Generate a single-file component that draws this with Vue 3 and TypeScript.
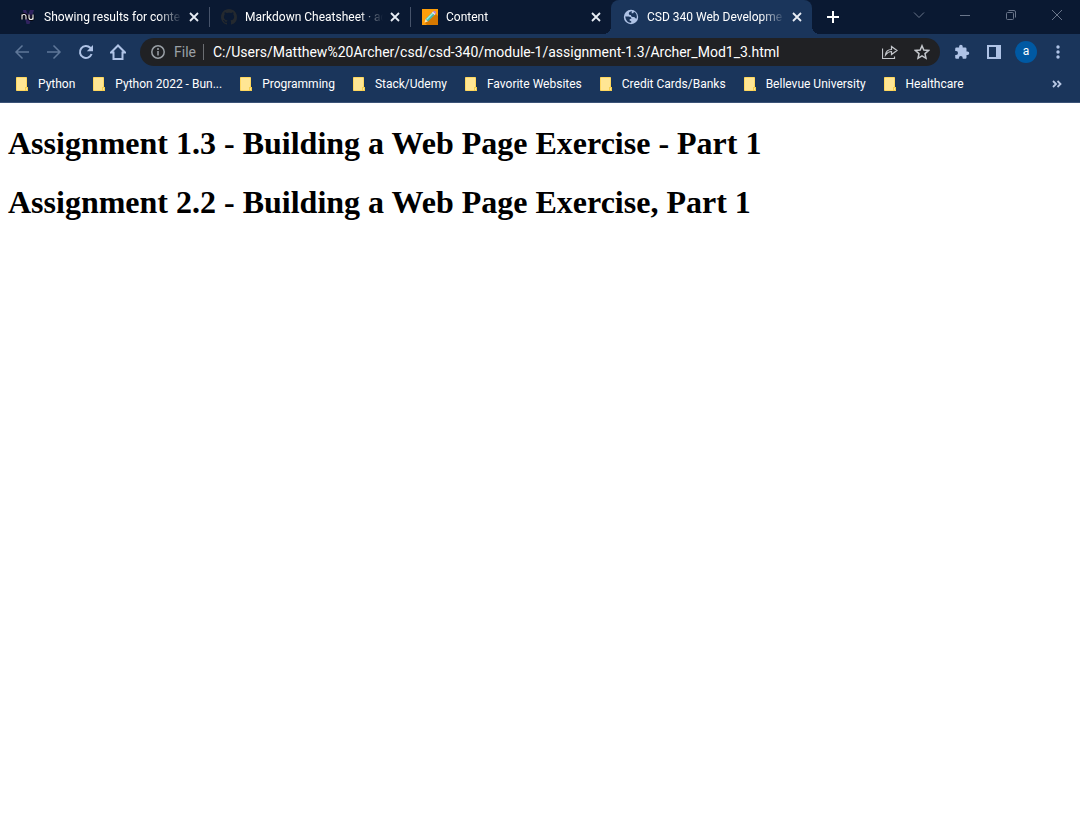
<script setup lang="ts">
import { ref } from 'vue'

interface Tab {
  icon: 'nu' | 'github' | 'pencil' | 'globe'
  title: string
}

const tabs: Tab[] = [
  { icon: 'nu', title: 'Showing results for conte' },
  { icon: 'github', title: 'Markdown Cheatsheet · ad' },
  { icon: 'pencil', title: 'Content' },
  { icon: 'globe', title: 'CSD 340 Web Developme' },
]
const activeTab = ref(3)

const address = ref('C:/Users/Matthew%20Archer/csd/csd-340/module-1/assignment-1.3/Archer_Mod1_3.html')

const bookmarks: string[] = [
  'Python',
  'Python 2022 - Bun...',
  'Programming',
  'Stack/Udemy',
  'Favorite Websites',
  'Credit Cards/Banks',
  'Bellevue University',
  'Healthcare',
]
</script>

<template>
  <div class="browser">
    <header class="chrome">
      <div class="tab-strip">
        <div class="tabs">
          <div v-for="(tab, i) in tabs" :key="tab.title" class="tab" :class="{ active: i === activeTab, before: i === activeTab - 1 }">
            <button class="tab-main" type="button" @click="activeTab = i">
              <svg v-if="tab.icon === 'nu'" class="favicon" viewBox="0 0 16 16">
                <path d="M3 1h3l2 5 2-5h4L9.500 15h-3z" fill="#30235f" />
                <path d="M2 10.500V5.500M2 7.500q0-2 2-2t2 2v3M9 5.500v3q0 2 2 2t2-2v-3M13 5.500v5" fill="none" stroke="#06060c" stroke-width="3" />
                <path d="M2 10.500V5.500M2 7.500q0-2 2-2t2 2v3M9 5.500v3q0 2 2 2t2-2v-3M13 5.500v5" fill="none" stroke="#f4f4f6" stroke-width="1.100" />
              </svg>
              <svg v-else-if="tab.icon === 'github'" class="favicon" viewBox="0 0 16 16">
                <path fill="#24292f" d="M8 0C3.580 0 0 3.580 0 8c0 3.540 2.290 6.530 5.470 7.590.4.070.55-.17.55-.38 0-.19-.010-.82-.010-1.490-2.010.37-2.530-.49-2.690-.94-.09-.23-.48-.94-.82-1.130-.28-.15-.68-.52-.010-.53.63-.010 1.080.58 1.230.82.72 1.210 1.870.87 2.330.66.070-.52.28-.87.51-1.070-1.780-.2-3.640-.89-3.640-3.950 0-.87.31-1.590.82-2.150-.08-.2-.36-1.020.08-2.120 0 0 .67-.21 2.200.82.64-.18 1.320-.27 2-.27s1.360.09 2 .27c1.530-1.040 2.200-.82 2.200-.82.44 1.100.16 1.920.08 2.120.51.56.82 1.270.82 2.150 0 3.070-1.870 3.750-3.650 3.950.29.25.54.73.54 1.480 0 1.070-.010 1.930-.010 2.200 0 .21.15.46.55.38A8.010 8.010 0 0 0 16 8c0-4.420-3.580-8-8-8z" />
              </svg>
              <svg v-else-if="tab.icon === 'pencil'" class="favicon" viewBox="0 0 16 16">
                <path fill="#ff9f0a" d="M0 0h16v16H0z" />
                <path fill="#d67800" d="M3 14 14 5l2 2v9H5z" />
                <path fill="#f6e2c0" d="m2.500 13.500 1-3.500 2.500 2.500z" />
                <path fill="#43b9ad" d="m3.500 10 6.500-6.500L12.500 6 6 12.500z" />
                <path fill="#a4ecdc" d="m4 10 6.500-6.500 1 1L5 11z" />
                <path fill="#e6e1ff" d="m10 3.500 1-1L13.500 5l-1 1z" />
                <path fill="#b884d9" d="m11 2.500.6-.5q.8-.5 1.700.3t.7 1.700l-.5 1z" />
              </svg>
              <svg v-else class="favicon" viewBox="0 0 16 16">
                <circle cx="8" cy="8" r="7.200" fill="#afc3e6" />
                <path fill="#1a355b" d="M9 2.200Q5.800 2.500 5.800 4.700q.2 1.600 2 1.300.3 2.400 2.500 2 1.500-.2 2 1.300l1.400.2Q14.500 4.500 11 2.800l-.8 1.400H8.500zM2.200 7.500h3.600q2.600.2 2.700 2.300l-1.800.2v1.700l1.500.2v1.900Q3 13.800 2.200 7.500z" />
              </svg>
              <span class="title">{{ tab.title }}</span>
            </button>
            <button class="close" type="button" aria-label="Close tab">
              <svg viewBox="0 0 16 16"><path d="m4 4 8 8m0-8-8 8" fill="none" stroke="#e8edf5" stroke-width="1.800" /></svg>
            </button>
          </div>
          <button class="new-tab" type="button" aria-label="New tab">
            <svg viewBox="0 0 16 16"><path d="M8 2v12M2 8h12" fill="none" stroke="#fff" stroke-width="2" /></svg>
          </button>
        </div>
        <div class="window-controls">
          <button type="button" aria-label="Search tabs"><svg viewBox="0 0 16 16"><path d="m3 5.500 5 5 5-5" /></svg></button>
          <button type="button" aria-label="Minimize"><svg viewBox="0 0 16 16"><path d="M3 8.500h10" /></svg></button>
          <button type="button" aria-label="Restore">
            <svg viewBox="0 0 16 16"><rect x="3.500" y="5.500" width="7" height="7" rx="1" /><path d="M5.500 3.500H11q1.500 0 1.500 1.500v5.500" /></svg>
          </button>
          <button type="button" aria-label="Close window"><svg viewBox="0 0 16 16"><path d="m3 3 10 10m0-10L3 13" /></svg></button>
        </div>
      </div>

      <div class="toolbar">
        <nav class="nav">
          <button type="button" class="dim" aria-label="Back"><svg viewBox="0 0 16 16"><path d="M15 8H2m6.500-6.500L2 8l6.500 6.500" /></svg></button>
          <button type="button" class="dim" aria-label="Forward"><svg viewBox="0 0 16 16"><path d="M1 8h13M7.500 1.500 14 8l-6.500 6.500" /></svg></button>
          <button type="button" aria-label="Reload">
            <svg viewBox="0 0 16 16"><path class="bold" d="M13.600 10A6 6 0 1 1 12.300 3.800L14 5.500" /><path d="M15 1v6.200H8.800z" class="solid" /></svg>
          </button>
          <button type="button" aria-label="Home"><svg viewBox="0 0 16 16"><path class="bold" d="M1 8.500 8 1.500l7 7h-2.500v6.500h-9V8.500z" /></svg></button>
        </nav>
        <form class="omnibox" @submit.prevent>
          <button class="site-info" type="button">
            <svg viewBox="0 0 16 16"><circle cx="8" cy="8" r="6.200" /><path d="M8 7v4.500M8 4v2" /></svg>
            <span>File</span>
          </button>
          <input v-model="address" type="text" aria-label="Address" spellcheck="false" />
          <button type="button" aria-label="Share">
            <svg viewBox="0 0 16 16"><path class="fine" d="M.5 4.500v10h12v-2M3.500 11q.5-5.500 6-5.500V2.500L15 6.500l-5.500 4v-3Q6 7.500 3.500 11z" /></svg>
          </button>
          <button type="button" aria-label="Bookmark this page">
            <svg viewBox="0 0 16 16"><path d="m8 1.800 1.800 4.300 4.700.4L11 9.600l1 4.700-4-2.500-4 2.500 1-4.700L1.500 6.500l4.700-.4z" /></svg>
          </button>
        </form>
        <div class="actions">
          <button type="button" aria-label="Extensions">
            <svg viewBox="0 0 16 16"><path class="solid" d="M13.500 7.500h-1V4.700q0-1.200-1.200-1.200H8.700V2.600a1.800 1.800 0 0 0-3.600 0v.9H2.400Q1.200 3.500 1.200 4.700v2.400h.9a1.900 1.900 0 0 1 0 3.800h-.9v2.700q0 1.200 1.200 1.200h2.500v-.9a1.900 1.900 0 0 1 3.800 0v.9h2.600q1.200 0 1.200-1.200V11h1a1.750 1.750 0 0 0 0-3.500z" /></svg>
          </button>
          <button type="button" aria-label="Side panel">
            <svg viewBox="0 0 16 16"><path class="solid" fill-rule="evenodd" d="M1 1h14v14H1zm2 2v10h7V3z" /></svg>
          </button>
          <button type="button" class="profile" aria-label="Profile"><span>a</span></button>
          <button type="button" aria-label="Menu">
            <svg viewBox="0 0 16 16"><g class="solid"><circle cx="8" cy="3" r="1.700" /><circle cx="8" cy="8" r="1.700" /><circle cx="8" cy="13" r="1.700" /></g></svg>
          </button>
        </div>
      </div>

      <nav class="bookmarks" aria-label="Bookmarks">
        <button v-for="name in bookmarks" :key="name" class="bookmark" type="button">
          <svg viewBox="0 0 12 14">
            <path d="M.5.5h10v13H.5z" fill="#ffe694" stroke="#ffd75e" />
            <path d="M9 10h3v4H9z" fill="#f5cf50" /><path d="M10 11h1v2h-1z" fill="#ffe694" />
          </svg>
          <span>{{ name }}</span>
        </button>
        <button class="overflow" type="button" aria-label="More bookmarks">
          <svg viewBox="0 0 16 16"><path d="m4 5 3 3-3 3m4.500-6 3 3-3 3" fill="none" stroke="#b8c8e4" stroke-width="1.800" /></svg>
        </button>
      </nav>
    </header>

    <main class="page">
      <h1>Assignment 1.3 - Building a Web Page Exercise - Part 1</h1>
      <h1>Assignment 2.2 - Building a Web Page Exercise, Part 1</h1>
    </main>
  </div>
</template>

<style>
body {
  margin: 0;
  background: #fff;
}
</style>

<style scoped>
.browser {
  min-height: 100vh;
  background: #fff;
}
.chrome {
  background: #1a355b;
  border-bottom: 1px solid #3b5377;
  font-family: "Segoe UI", Roboto, "Open Sans", sans-serif;
  font-size: 12px;
  color: #fff;
}
button {
  display: flex;
  align-items: center;
  justify-content: center;
  padding: 0;
  border: 0;
  background: none;
  color: inherit;
  font: inherit;
}
svg {
  display: block;
  flex: none;
  width: 16px;
  height: 16px;
}
.tab-strip {
  display: flex;
  justify-content: space-between;
  height: 34px;
  background: #0a1932;
}
.tabs {
  display: flex;
  flex: 1;
  min-width: 0;
  padding-left: 8px;
}
.tab {
  position: relative;
  display: flex;
  align-items: center;
  flex: 0 1 201px;
  box-sizing: border-box;
  min-width: 0;
  padding: 0 7px 0 12px;
}
.tab:not(.active, .before)::after {
  content: "";
  position: absolute;
  right: -1px;
  top: 7px;
  width: 1px;
  height: 20px;
  background: #46536a;
}
.tab.active {
  border-radius: 8px 8px 0 0;
  background: #1a355b;
}
.tab.active::before,
.tab.active::after {
  content: "";
  position: absolute;
  bottom: 0;
  width: 8px;
  height: 8px;
}
.tab.active::before {
  right: 100%;
  background: radial-gradient(circle at 0 0, transparent 8px, #1a355b 8px);
}
.tab.active::after {
  left: 100%;
  background: radial-gradient(circle at 100% 0, transparent 8px, #1a355b 8px);
}
.tab-main {
  flex: 1;
  min-width: 0;
  gap: 8px;
  justify-content: flex-start;
  height: 34px;
}
.title {
  flex: 1;
  overflow: hidden;
  white-space: nowrap;
  text-align: left;
  line-height: 16px;
  mask-image: linear-gradient(to right, #000 calc(100% - 24px), transparent);
}
.close {
  margin-left: 4px;
}
.new-tab {
  width: 28px;
  margin-left: 7px;
}
.window-controls {
  display: flex;
  height: 29px;
}
.window-controls button {
  width: 46px;
}
.window-controls path,
.window-controls rect {
  fill: none;
  stroke: #69758a;
}
.toolbar {
  display: flex;
  align-items: center;
  height: 36px;
  color: #afc3e6;
}
.toolbar path,
.toolbar circle {
  fill: none;
  stroke: currentColor;
  stroke-width: 1.5;
}
.toolbar path.bold {
  stroke-width: 2;
}
.toolbar path.fine {
  stroke-width: 1.2;
}
.toolbar path.solid,
.toolbar .solid circle {
  fill: currentColor;
  stroke: none;
}
.nav {
  display: flex;
  padding: 0 6px;
}
.nav button,
.actions button {
  width: 32px;
  height: 32px;
}
.nav .dim {
  color: #5f7799;
}
.omnibox {
  display: flex;
  align-items: center;
  flex: 1;
  min-width: 0;
  box-sizing: border-box;
  height: 28px;
  padding: 0 2px 0 10px;
  border-radius: 14px;
  background: #202124;
  color: #c4c7cc;
}
.omnibox > button {
  width: 32px;
  height: 28px;
}
.omnibox .site-info {
  width: auto;
  height: 16px;
  gap: 8px;
  padding-right: 7px;
  border-right: 1px solid #6b6e72;
  color: #9aa0a6;
  font-size: 14px;
}
.omnibox input {
  flex: 1;
  min-width: 0;
  padding: 0 0 0 9px;
  border: 0;
  outline: 0;
  background: none;
  color: #fff;
  font: inherit;
  font-size: 14px;
}
.actions {
  display: flex;
  padding: 0 6px;
}
.profile span {
  width: 22px;
  height: 22px;
  border-radius: 50%;
  background: #0059a3;
  color: #fff;
  line-height: 21px;
  text-align: center;
}
.bookmarks {
  display: flex;
  align-items: center;
  gap: 18px;
  height: 32px;
  padding: 0 15px 4px 16px;
  box-sizing: border-box;
}
.bookmark {
  gap: 10px;
  white-space: nowrap;
}
.bookmark svg {
  width: 12px;
  height: 14px;
}
.overflow {
  margin-left: auto;
}
.page {
  display: flow-root;
  padding: 0 8px;
  color: #000;
  font-family: "Liberation Serif", "Times New Roman", serif;
}
.page h1 {
  margin: 22px 0;
  font-size: 32px;
  line-height: 37px;
  font-weight: bold;
}
</style>
